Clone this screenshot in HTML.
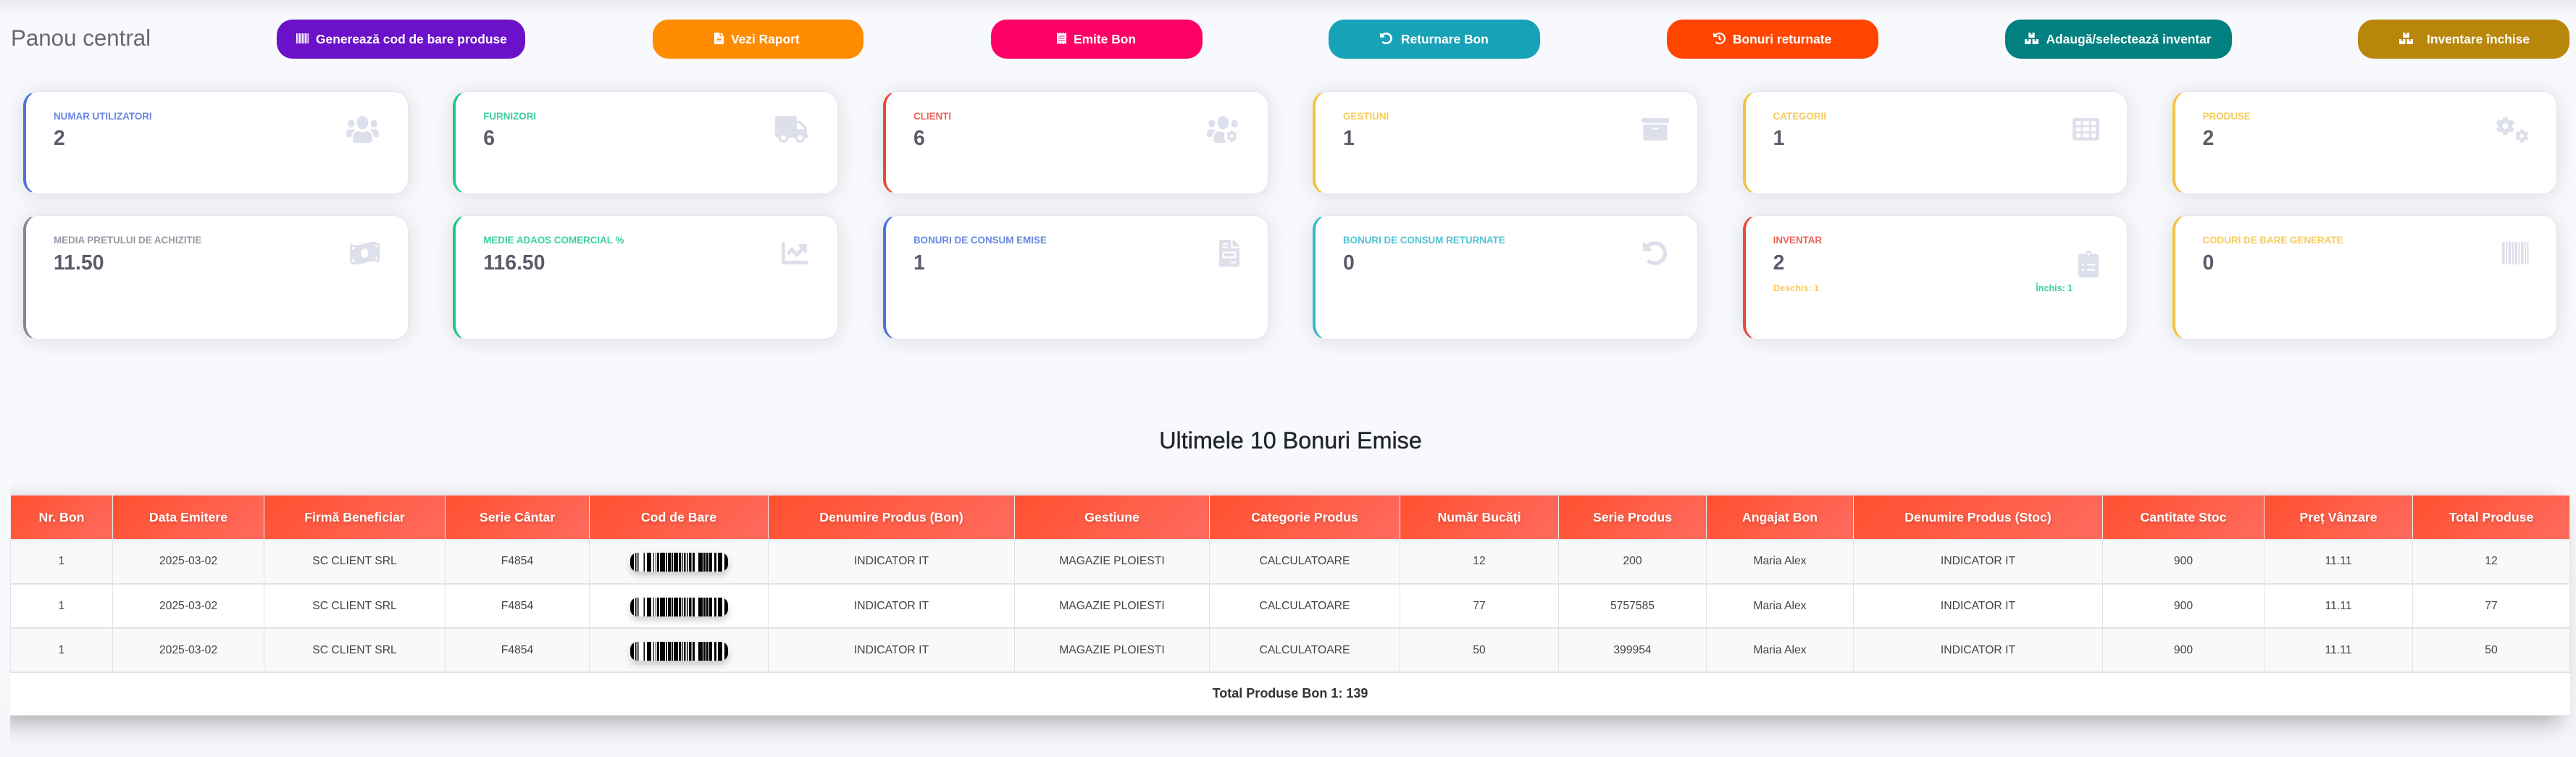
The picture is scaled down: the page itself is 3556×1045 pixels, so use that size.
<!DOCTYPE html>
<html lang="ro">
<head>
<meta charset="utf-8">
<title>Panou central</title>
<style>
*{box-sizing:border-box}
html,body{margin:0;padding:0;width:3556px;height:1045px;overflow:hidden;background:#f8f9fc;font-family:"Liberation Sans",sans-serif}
#root{position:relative;width:3556px;height:1045px;overflow:hidden;background:linear-gradient(#f8f9fc 0,#f8f9fc 700px,#f5f6fa 1045px)}
.topshade{position:absolute;left:0;top:0;width:3556px;height:24px;background:linear-gradient(#e9ebef,#f8f9fc)}
h1{position:absolute;left:15px;top:33px;margin:0;font-size:31.3px;line-height:40px;font-weight:400;color:#666873;white-space:nowrap}
h2{position:absolute;left:0;width:3563px;top:588px;margin:0;text-align:center;font-size:32.3px;line-height:40px;font-weight:400;color:#212529;-webkit-text-stroke:.4px #212529}
.btn{position:absolute;top:27px;height:54px;border-radius:22px;color:#fff;text-decoration:none}
.btn svg{position:absolute;fill:#fff}
.btn span{position:absolute;top:17px;line-height:20px;font-size:17.4px;font-weight:700;white-space:nowrap}
.card{position:absolute;width:531.5px;background:#fff;border:1px solid #e3e6f0;border-left:4.5px solid;border-radius:20px;box-shadow:0 2.4px 28px 0 rgba(58,59,69,.15)}
.r1{top:126px;height:142px}
.r2{top:297px;height:172px}
.card .l{position:absolute;left:38px;top:27px;font-size:13.4px;line-height:14px;font-weight:700;white-space:nowrap;opacity:.85}
.card .n{position:absolute;left:38px;font-size:28.4px;line-height:30px;font-weight:700;color:#5a5c69}
.r1 .n{top:48.5px}
.r2 .n{top:50px}
.card svg{position:absolute;fill:#dddfeb}
.card .s{position:absolute;top:93px;font-size:12.6px;line-height:14px;font-weight:700;white-space:nowrap;opacity:.85}
.p{border-left-color:#4e73df}.p .l{color:#4e73df}
.g{border-left-color:#1cc88a}.g .l{color:#1cc88a}
.d{border-left-color:#e74a3b}.d .l{color:#e74a3b}
.w{border-left-color:#f6c23e}.w .l{color:#f6c23e}
.c{border-left-color:#858796}.c .l{color:#858796}
.i{border-left-color:#36b9cc}.i .l{color:#36b9cc}
#tw{position:absolute;left:14px;top:640px;width:3542px;height:405px;overflow:hidden}
table{position:absolute;left:0;top:44px;width:3533px;table-layout:fixed;border-collapse:collapse;background:#fff;box-shadow:-14px 10px 30px rgba(0,0,0,.3)}
th{height:61px;padding:0;font-size:17.7px;font-weight:700;color:#fff;text-align:center;white-space:nowrap;background:linear-gradient(135deg,#ff5030,#ff6b5e);border:1px solid #e8e8e8;border-top:0;border-bottom:2px solid #e6e6e6;text-shadow:1px 2px 4px rgba(0,0,0,.2)}
td{padding:0;font-size:15.7px;font-weight:400;color:#444;text-align:center;white-space:nowrap;border-left:1px solid #e0e3e7;border-right:1px solid #e0e3e7;border-bottom:2px solid #e2e2e2;height:61px}
tbody tr:nth-child(odd) td{background:#f9f9f9}
tbody tr:first-child td{padding-bottom:2px}
td.f{height:59px;background:#fff!important;font-size:18px;font-weight:700;color:#333;border:0;border-bottom:1px solid #e4e4e4}
.bc{display:block;position:relative;top:1px;width:135px;height:26px;margin:0 auto;border-radius:10px;overflow:hidden;background:#fff;box-shadow:0 5px 10px rgba(0,0,0,.2)}
.bc svg{display:block}
</style>
</head>
<body>
<div id="root">
<svg width="0" height="0" style="position:absolute">
<defs>
<path id="cog" d="M487.4 315.7l-42.6-24.6c4.3-23.2 4.3-47 0-70.2l42.6-24.6c4.9-2.8 7.1-8.6 5.5-14-11.1-35.6-30-67.8-54.7-94.6-3.8-4.1-10-5.1-14.8-2.3L380.8 110c-17.9-15.4-38.5-27.3-60.8-35.1V25.8c0-5.6-3.9-10.5-9.4-11.7-36.7-8.2-74.3-7.8-109.2 0-5.5 1.2-9.4 6.1-9.4 11.7V75c-22.2 7.9-42.8 19.8-60.8 35.1L88.7 85.5c-4.9-2.8-11-1.9-14.8 2.3-24.7 26.7-43.6 58.9-54.7 94.6-1.7 5.4.6 11.2 5.5 14L67.3 221c-4.3 23.2-4.3 47 0 70.2l-42.6 24.6c-4.9 2.8-7.1 8.6-5.5 14 11.1 35.6 30 67.8 54.7 94.6 3.8 4.1 10 5.1 14.8 2.3l42.6-24.6c17.9 15.4 38.5 27.3 60.8 35.1v49.2c0 5.6 3.9 10.5 9.4 11.7 36.7 8.2 74.3 7.8 109.2 0 5.5-1.2 9.4-6.1 9.4-11.7v-49.2c22.2-7.9 42.8-19.8 60.8-35.1l42.6 24.6c4.9 2.8 11 1.9 14.8-2.3 24.7-26.7 43.6-58.9 54.7-94.6 1.5-5.5-.7-11.3-5.6-14.1zM256 336c-44.1 0-80-35.9-80-80s35.9-80 80-80 80 35.9 80 80-35.9 80-80 80z"/>
<path id="boxes" d="M560 288h-80v96l-32-21.3-32 21.3v-96h-80c-8.8 0-16 7.2-16 16v192c0 8.8 7.2 16 16 16h224c8.8 0 16-7.2 16-16V304c0-8.8-7.2-16-16-16zm-384-64h224c8.8 0 16-7.2 16-16V16c0-8.8-7.2-16-16-16h-80v96l-32-21.3L256 96V0h-80c-8.8 0-16 7.2-16 16v192c0 8.8 7.2 16 16 16zm64 64h-80v96l-32-21.3L96 384v-96H16c-8.8 0-16 7.2-16 16v192c0 8.8 7.2 16 16 16h224c8.8 0 16-7.2 16-16V304c0-8.8-7.2-16-16-16z"/>
<path id="barcode" d="M0 64h50v384H0zM72 64h28v384H72zM122 64h50v384h-50zM194 64h28v384h-28zM244 64h50v384h-50zM316 64h28v384h-28zM366 64h50v384h-50zM438 64h28v384h-28zM484 64h28v384h-28z"/>
<symbol id="bars" viewBox="0 0 135 26" preserveAspectRatio="none">
<path d="M0 0h5v26H0zM7 0h1.5v26H7zM10 0h1.5v26H10zM18.500 0h1.500v26h-1.500zM23 0h6v26h-6zM32 0h1v26h-1zM35 0h1v26h-1zM37 0h3v26h-3zM41 0h7v26h-7zM49 0h2v26h-2zM52 0h4v26h-4zM57 0h2v26h-2zM60 0h6v26h-6zM67 0h3v26h-3zM71 0h1.500v26H71zM74 0h2.500v26H74zM78 0h1.500v26H78zM81 0h3.500v26H81zM86 0h3v26h-3zM94 0h6v26h-6zM101 0h3v26h-3zM105 0h3v26h-3zM109 0h4v26h-4zM116 0h3v26h-3zM121 0h6v26h-6zM130 0h5v26h-5z" fill="#000"/>
</symbol>
</defs>
</svg>

<div class="topshade"></div>
<h1>Panou central</h1>

<a class="btn" style="left:382px;width:343px;background:#6a11c9"><svg style="left:27px;top:19px;width:17px;height:14px" viewBox="0 64 512 384" preserveAspectRatio="none"><use href="#barcode"/></svg><span style="left:54px">Generează cod de bare produse</span></a>
<a class="btn" style="left:900.500px;width:291.500px;background:#ff8c00"><svg style="left:85px;top:18px;width:13px;height:16px" viewBox="0 0 384 512" preserveAspectRatio="none"><path d="M224 136V0H24C10.700 0 0 10.700 0 24v464c0 13.300 10.700 24 24 24h336c13.300 0 24-10.700 24-24V160H248c-13.200 0-24-10.800-24-24zm64 236c0 6.600-5.400 12-12 12H108c-6.600 0-12-5.400-12-12v-8c0-6.600 5.400-12 12-12h168c6.600 0 12 5.400 12 12v8zm0-64c0 6.600-5.400 12-12 12H108c-6.600 0-12-5.400-12-12v-8c0-6.600 5.400-12 12-12h168c6.600 0 12 5.400 12 12v8zm0-72v8c0 6.600-5.400 12-12 12H108c-6.600 0-12-5.400-12-12v-8c0-6.600 5.400-12 12-12h168c6.600 0 12 5.400 12 12zm96-114.100v6.100H256V0h6.100c6.400 0 12.500 2.500 17 7l97.900 98c4.500 4.500 7 10.600 7 16.900z"/></svg><span style="left:108.500px">Vezi Raport</span></a>
<a class="btn" style="left:1368px;width:292px;background:#ff0066"><svg style="left:91px;top:18px;width:13px;height:16px" viewBox="0 0 384 512" preserveAspectRatio="none"><path d="M358.400 3.200L320 48 265.600 3.200a15.900 15.900 0 0 0-19.200 0L192 48 137.600 3.200a15.900 15.900 0 0 0-19.200 0L64 48 25.600 3.200C15-4.700 0 2.800 0 16v480c0 13.200 15 20.700 25.600 12.800L64 464l54.400 44.800a15.900 15.900 0 0 0 19.200 0L192 464l54.400 44.800a15.900 15.900 0 0 0 19.200 0L320 464l38.400 44.800c10.500 7.900 25.600.4 25.600-12.800V16c0-13.200-15-20.700-25.600-12.800zM320 360c0 4.400-3.600 8-8 8H72c-4.400 0-8-3.600-8-8v-16c0-4.400 3.600-8 8-8h240c4.400 0 8 3.600 8 8v16zm0-96c0 4.400-3.600 8-8 8H72c-4.400 0-8-3.600-8-8v-16c0-4.400 3.600-8 8-8h240c4.400 0 8 3.600 8 8v16zm0-96c0 4.400-3.600 8-8 8H72c-4.400 0-8-3.600-8-8v-16c0-4.400 3.600-8 8-8h240c4.400 0 8 3.600 8 8v16z"/></svg><span style="left:114px">Emite Bon</span></a>
<a class="btn" style="left:1834px;width:292px;background:#17a2b8"><svg style="left:71px;top:18px;width:17px;height:16px" viewBox="8 8 496 496" preserveAspectRatio="none"><path d="M255.545 8c-66.269.119-126.438 26.233-170.860 68.685L48.971 40.971C33.851 25.851 8 36.559 8 57.941V192c0 13.255 10.745 24 24 24h134.059c21.382 0 32.090-25.851 16.971-40.971l-41.750-41.750c30.864-28.899 70.801-44.907 113.230-45.273 92.398-.798 170.283 73.977 169.484 169.442C423.236 348.009 349.816 424 256 424c-41.127 0-79.997-14.678-110.630-41.556-4.743-4.161-11.906-3.908-16.368.553L89.340 422.659c-4.872 4.872-4.631 12.815.482 17.433C133.798 479.813 192.074 504 256 504c136.966 0 247.999-111.033 248-247.998C504.001 119.193 392.354 7.755 255.545 8z"/></svg><span style="left:100px">Returnare Bon</span></a>
<a class="btn" style="left:2301px;width:292.400px;background:#ff4500"><svg style="left:63.500px;top:18px;width:17px;height:16px" viewBox="8 8 496 496" preserveAspectRatio="none"><path d="M504 255.531c.253 136.640-111.180 248.372-247.820 248.468-59.015.042-113.223-20.530-155.822-54.911-11.077-8.940-11.905-25.541-1.839-35.607l11.267-11.267c8.609-8.609 22.353-9.551 31.891-1.984C173.062 425.135 212.781 440 256 440c101.705 0 184-82.311 184-184 0-101.705-82.311-184-184-184-48.814 0-93.149 18.969-126.068 49.932l50.754 50.754c10.080 10.080 2.941 27.314-11.313 27.314H24c-8.837 0-16-7.163-16-16V38.627c0-14.254 17.234-21.393 27.314-11.314l49.372 49.372C129.209 34.136 189.552 8 256 8c136.810 0 247.747 110.780 248 247.531zm-180.912 78.784l9.823-12.630c8.138-10.463 6.253-25.542-4.210-33.679L288 256.349V152c0-13.255-10.745-24-24-24h-16c-13.255 0-24 10.745-24 24v135.651l65.409 50.874c10.463 8.137 25.541 6.253 33.679-4.210z"/></svg><span style="left:91px">Bonuri returnate</span></a>
<a class="btn" style="left:2768px;width:313px;background:#008080"><svg style="left:26.800px;top:18px;width:19px;height:16px" viewBox="0 0 576 512" preserveAspectRatio="none"><use href="#boxes"/></svg><span style="left:56.500px">Adaugă/selectează inventar</span></a>
<a class="btn" style="left:3254.700px;width:292.200px;background:#b8860b"><svg style="left:57.300px;top:18px;width:19px;height:16px" viewBox="0 0 576 512" preserveAspectRatio="none"><use href="#boxes"/></svg><span style="left:95.300px">Inventare închise</span></a>

<!-- row 1 -->
<div class="card r1 p" style="left:32px"><div class="l">NUMAR UTILIZATORI</div><div class="n">2</div>
<svg style="left:441.500px;top:33px;width:45px;height:37px" viewBox="0 32 640 448" preserveAspectRatio="none"><path d="M96 224c35.300 0 64-28.700 64-64s-28.700-64-64-64-64 28.700-64 64 28.700 64 64 64zm448 0c35.300 0 64-28.700 64-64s-28.700-64-64-64-64 28.700-64 64 28.700 64 64 64zm32 32h-64c-17.600 0-33.500 7.100-45.100 18.600 40.300 22.100 68.900 62 75.100 109.400h66c17.700 0 32-14.300 32-32v-32c0-35.300-28.700-64-64-64zm-256 0c61.900 0 112-50.100 112-112S381.900 32 320 32 208 82.100 208 144s50.100 112 112 112zm76.800 32h-8.300c-20.800 10-43.900 16-68.500 16s-47.600-6-68.500-16h-8.300C179.600 288 128 339.600 128 403.200V432c0 26.500 21.500 48 48 48h288c26.500 0 48-21.500 48-48v-28.800c0-63.600-51.600-115.200-115.200-115.200zm-223.700-13.400C161.500 263.100 145.600 256 128 256H64c-35.300 0-64 28.700-64 64v32c0 17.700 14.300 32 32 32h65.900c6.300-47.400 34.900-87.300 75.200-109.400z"/></svg></div>
<div class="card r1 g" style="left:625.200px"><div class="l">FURNIZORI</div><div class="n">6</div>
<svg style="left:441px;top:33px;width:46px;height:37px" viewBox="0 0 640 512" preserveAspectRatio="none"><path d="M624 352h-16V243.900c0-12.700-5.100-24.900-14.100-33.900L494 110.100c-9-9-21.200-14.100-33.900-14.100H416V48c0-26.500-21.500-48-48-48H48C21.500 0 0 21.500 0 48v320c0 26.500 21.500 48 48 48h16c0 53 43 96 96 96s96-43 96-96h128c0 53 43 96 96 96s96-43 96-96h48c8.800 0 16-7.200 16-16v-32c0-8.800-7.200-16-16-16zM160 464c-26.500 0-48-21.500-48-48s21.500-48 48-48 48 21.500 48 48-21.500 48-48 48zm320 0c-26.500 0-48-21.500-48-48s21.500-48 48-48 48 21.500 48 48-21.500 48-48 48zm80-208H416V144h44.100l99.900 99.900V256z"/></svg></div>
<div class="card r1 d" style="left:1219px"><div class="l">CLIENTI</div><div class="n">6</div>
<svg style="left:442.500px;top:33px;width:45px;height:37px" viewBox="0 32 640 448" preserveAspectRatio="none"><path d="M96 224c35.300 0 64-28.700 64-64s-28.700-64-64-64-64 28.700-64 64 28.700 64 64 64zm448 0c35.300 0 64-28.700 64-64s-28.700-64-64-64-64 28.700-64 64 28.700 64 64 64zm32 32h-64c-17.600 0-33.500 7.100-45.100 18.600 40.300 22.100 68.900 62 75.100 109.400h66c17.700 0 32-14.300 32-32v-32c0-35.300-28.700-64-64-64zm-256 0c61.900 0 112-50.100 112-112S381.900 32 320 32 208 82.100 208 144s50.100 112 112 112zm76.800 32h-8.300c-20.800 10-43.900 16-68.500 16s-47.600-6-68.500-16h-8.300C179.600 288 128 339.600 128 403.200V432c0 26.500 21.500 48 48 48h288c26.500 0 48-21.500 48-48v-28.800c0-63.600-51.600-115.200-115.200-115.200zm-223.700-13.400C161.500 263.100 145.600 256 128 256H64c-35.300 0-64 28.700-64 64v32c0 17.700 14.300 32 32 32h65.900c6.300-47.400 34.900-87.300 75.200-109.400z"/><circle cx="490" cy="370" r="150" fill="#fff"/><use href="#cog" transform="translate(385 265) scale(.41)"/></svg></div>
<div class="card r1 w" style="left:1812px"><div class="l">GESTIUNI</div><div class="n">1</div>
<svg style="left:450px;top:36px;width:38px;height:31px" viewBox="0 32 512 448" preserveAspectRatio="none"><path d="M32 448c0 17.700 14.300 32 32 32h384c17.700 0 32-14.300 32-32V160H32v288zm160-212c0-6.600 5.400-12 12-12h104c6.600 0 12 5.400 12 12v8c0 6.600-5.400 12-12 12H204c-6.600 0-12-5.400-12-12v-8zM480 32H32C14.300 32 0 46.300 0 64v48c0 8.800 7.200 16 16 16h480c8.800 0 16-7.200 16-16V64c0-17.700-14.300-32-32-32z"/></svg></div>
<div class="card r1 w" style="left:2405.600px"><div class="l">CATEGORII</div><div class="n">1</div>
<svg style="left:451px;top:36px;width:37px;height:31px" viewBox="0 0 512 512" preserveAspectRatio="none"><path fill-rule="evenodd" d="M48 0h416a48 48 0 0 1 48 48v416a48 48 0 0 1-48 48H48a48 48 0 0 1-48-48V48A48 48 0 0 1 48 0zM70 70v90h90V70zm126 0v90h120V70zm156 0v90h90V70zM70 211v90h90v-90zm126 0v90h120v-90zm156 0v90h90v-90zM70 352v90h90v-90zm126 0v90h120v-90zm156 0v90h90v-90z"/></svg></div>
<div class="card r1 w" style="left:2998.500px"><div class="l">PRODUSE</div><div class="n">2</div>
<svg style="left:442.400px;top:34px;width:46px;height:36px" viewBox="0 0 640 512" preserveAspectRatio="none"><use href="#cog" transform="scale(.72)"/><use href="#cog" transform="translate(370 245) scale(.52)"/></svg></div>

<!-- row 2 -->
<div class="card r2 c" style="left:32px"><div class="l">MEDIA PRETULUI DE ACHIZITIE</div><div class="n">11.50</div>
<svg style="left:446.500px;top:36px;width:41px;height:31px" viewBox="0 32 640 448" preserveAspectRatio="none"><path d="M621.160 54.460C582.370 38.190 543.550 32 504.750 32c-123.170-.01-246.330 62.340-369.500 62.340-30.890 0-61.760-3.920-92.650-13.720-3.470-1.100-6.950-1.620-10.350-1.620C15.040 79 0 92.320 0 110.810v317.260c0 12.630 7.230 24.600 18.840 29.460C57.630 473.810 96.450 480 135.250 480c123.170 0 246.340-62.350 369.510-62.350 30.890 0 61.760 3.920 92.650 13.720 3.470 1.100 6.950 1.620 10.350 1.620 17.210 0 32.250-13.320 32.250-31.810V83.930c-.01-12.640-7.240-24.600-18.850-29.470zM48 132.220c20.120 5.040 41.120 7.570 62.720 8.930C104.840 170.540 79 192.690 48 192.690v-60.470zm0 285v-47.780c34.370 0 62.180 27.270 63.710 61.400-22.530-1.810-43.590-6.310-63.710-13.620zM320 352c-44.190 0-80-42.990-80-96 0-53.020 35.820-96 80-96s80 42.980 80 96c0 53.030-35.830 96-80 96zm272 27.780c-17.520-4.390-35.710-6.850-54.320-8.440 5.870-26.080 27.500-45.880 54.320-49.280v57.720zm0-236.110c-30.890-3.910-54.860-29.700-55.810-61.550 19.540 2.170 38.090 6.230 55.810 12.660v48.890z"/></svg></div>
<div class="card r2 g" style="left:625.200px"><div class="l">MEDIE ADAOS COMERCIAL %</div><div class="n">116.50</div>
<svg style="left:450px;top:36px;width:37px;height:31px" viewBox="0 64 512 384" preserveAspectRatio="none"><path d="M496 384H64V80c0-8.840-7.160-16-16-16H16C7.160 64 0 71.160 0 80v336c0 17.670 14.330 32 32 32h464c8.840 0 16-7.160 16-16v-32c0-8.840-7.160-16-16-16zM464 96H345.940c-21.380 0-32.090 25.850-16.970 40.970l32.400 32.400L288 242.750l-73.370-73.370c-12.500-12.500-32.760-12.500-45.250 0l-68.690 68.690c-6.250 6.250-6.250 16.380 0 22.630l22.620 22.620c6.250 6.250 16.380 6.250 22.630 0L192 237.250l73.370 73.370c12.500 12.500 32.760 12.500 45.250 0l96-96 32.400 32.400c15.120 15.120 40.970 4.410 40.970-16.970V112c.01-8.840-7.150-16-16-16z"/></svg></div>
<div class="card r2 p" style="left:1219px"><div class="l">BONURI DE CONSUM EMISE</div><div class="n">1</div>
<svg style="left:459.500px;top:33px;width:28px;height:37px" viewBox="0 0 384 512" preserveAspectRatio="none"><path d="M288 256H96v64h192v-64zm89-151L279.100 7c-4.500-4.500-10.600-7-17-7H256v128h128v-6.100c0-6.300-2.500-12.400-7-16.900zm-153 31V0H24C10.700 0 0 10.700 0 24v464c0 13.300 10.700 24 24 24h336c13.300 0 24-10.700 24-24V160H248c-13.200 0-24-10.800-24-24zM64 72c0-4.420 3.580-8 8-8h80c4.420 0 8 3.580 8 8v16c0 4.420-3.580 8-8 8H72c-4.420 0-8-3.580-8-8V72zm0 64c0-4.420 3.580-8 8-8h80c4.420 0 8 3.580 8 8v16c0 4.420-3.580 8-8 8H72c-4.420 0-8-3.580-8-8v-16zm256 304c0 4.420-3.580 8-8 8h-80c-4.420 0-8-3.580-8-8v-16c0-4.420 3.580-8 8-8h80c4.420 0 8 3.580 8 8v16zm0-200v96c0 8.840-7.160 16-16 16H80c-8.840 0-16-7.160-16-16v-96c0-8.840 7.160-16 16-16h224c8.840 0 16 7.160 16 16z"/></svg></div>
<div class="card r2 i" style="left:1812px"><div class="l">BONURI DE CONSUM RETURNATE</div><div class="n">0</div>
<svg style="left:452px;top:35px;width:33px;height:33px" viewBox="8 8 496 496" preserveAspectRatio="none"><path d="M255.545 8c-66.269.119-126.438 26.233-170.860 68.685L48.971 40.971C33.851 25.851 8 36.559 8 57.941V192c0 13.255 10.745 24 24 24h134.059c21.382 0 32.090-25.851 16.971-40.971l-41.750-41.750c30.864-28.899 70.801-44.907 113.230-45.273 92.398-.798 170.283 73.977 169.484 169.442C423.236 348.009 349.816 424 256 424c-41.127 0-79.997-14.678-110.630-41.556-4.743-4.161-11.906-3.908-16.368.553L89.340 422.659c-4.872 4.872-4.631 12.815.482 17.433C133.798 479.813 192.074 504 256 504c136.966 0 247.999-111.033 248-247.998C504.001 119.193 392.354 7.755 255.545 8z"/></svg></div>
<div class="card r2 d" style="left:2405.600px"><div class="l">INVENTAR</div><div class="n">2</div>
<div class="s" style="left:38.500px;color:#f6c23e">Deschis: 1</div><div class="s" style="left:400.600px;color:#1cc88a">Închis: 1</div>
<svg style="left:459.900px;top:48px;width:28px;height:37px" viewBox="0 0 384 512" preserveAspectRatio="none"><path d="M336 64h-80c0-35.300-28.700-64-64-64s-64 28.700-64 64H48C21.500 64 0 85.500 0 112v352c0 26.500 21.500 48 48 48h288c26.500 0 48-21.500 48-48V112c0-26.500-21.500-48-48-48z"/><circle cx="192" cy="64" r="26" fill="#fff"/><circle cx="90" cy="266" r="20" fill="#fff"/><circle cx="90" cy="366" r="20" fill="#fff"/><rect x="160" y="250" width="160" height="32" rx="8" fill="#fff"/><rect x="160" y="350" width="160" height="32" rx="8" fill="#fff"/></svg></div>
<div class="card r2 w" style="left:2998.500px"><div class="l">CODURI DE BARE GENERATE</div><div class="n">0</div>
<svg style="left:451.600px;top:36px;width:36.500px;height:31px" viewBox="0 64 512 384" preserveAspectRatio="none"><use href="#barcode"/></svg></div>

<h2>Ultimele 10 Bonuri Emise</h2>

<div id="tw">
<table>
<colgroup><col style="width:141px"><col style="width:209px"><col style="width:250px"><col style="width:199px"><col style="width:247px"><col style="width:340px"><col style="width:269px"><col style="width:263px"><col style="width:219px"><col style="width:204px"><col style="width:203px"><col style="width:344px"><col style="width:223px"><col style="width:205px"><col style="width:217px"></colgroup>
<thead><tr><th>Nr. Bon</th><th>Data Emitere</th><th>Firmă Beneficiar</th><th>Serie Cântar</th><th>Cod de Bare</th><th>Denumire Produs (Bon)</th><th>Gestiune</th><th>Categorie Produs</th><th>Număr Bucăți</th><th>Serie Produs</th><th>Angajat Bon</th><th>Denumire Produs (Stoc)</th><th>Cantitate Stoc</th><th>Preț Vânzare</th><th>Total Produse</th></tr></thead>
<tbody>
<tr style="height:60px"><td style="height:60px">1</td><td>2025-03-02</td><td>SC CLIENT SRL</td><td>F4854</td><td><span class="bc"><svg width="135" height="26"><use href="#bars"/></svg></span></td><td>INDICATOR IT</td><td>MAGAZIE PLOIESTI</td><td>CALCULATOARE</td><td>12</td><td>200</td><td>Maria Alex</td><td>INDICATOR IT</td><td>900</td><td>11.11</td><td>12</td></tr>
<tr><td>1</td><td>2025-03-02</td><td>SC CLIENT SRL</td><td>F4854</td><td><span class="bc"><svg width="135" height="26"><use href="#bars"/></svg></span></td><td>INDICATOR IT</td><td>MAGAZIE PLOIESTI</td><td>CALCULATOARE</td><td>77</td><td>5757585</td><td>Maria Alex</td><td>INDICATOR IT</td><td>900</td><td>11.11</td><td>77</td></tr>
<tr><td>1</td><td>2025-03-02</td><td>SC CLIENT SRL</td><td>F4854</td><td><span class="bc"><svg width="135" height="26"><use href="#bars"/></svg></span></td><td>INDICATOR IT</td><td>MAGAZIE PLOIESTI</td><td>CALCULATOARE</td><td>50</td><td>399954</td><td>Maria Alex</td><td>INDICATOR IT</td><td>900</td><td>11.11</td><td>50</td></tr>
<tr><td class="f" colspan="15">Total Produse Bon 1: 139</td></tr>
</tbody>
</table>
</div>
</div>
</body>
</html>
